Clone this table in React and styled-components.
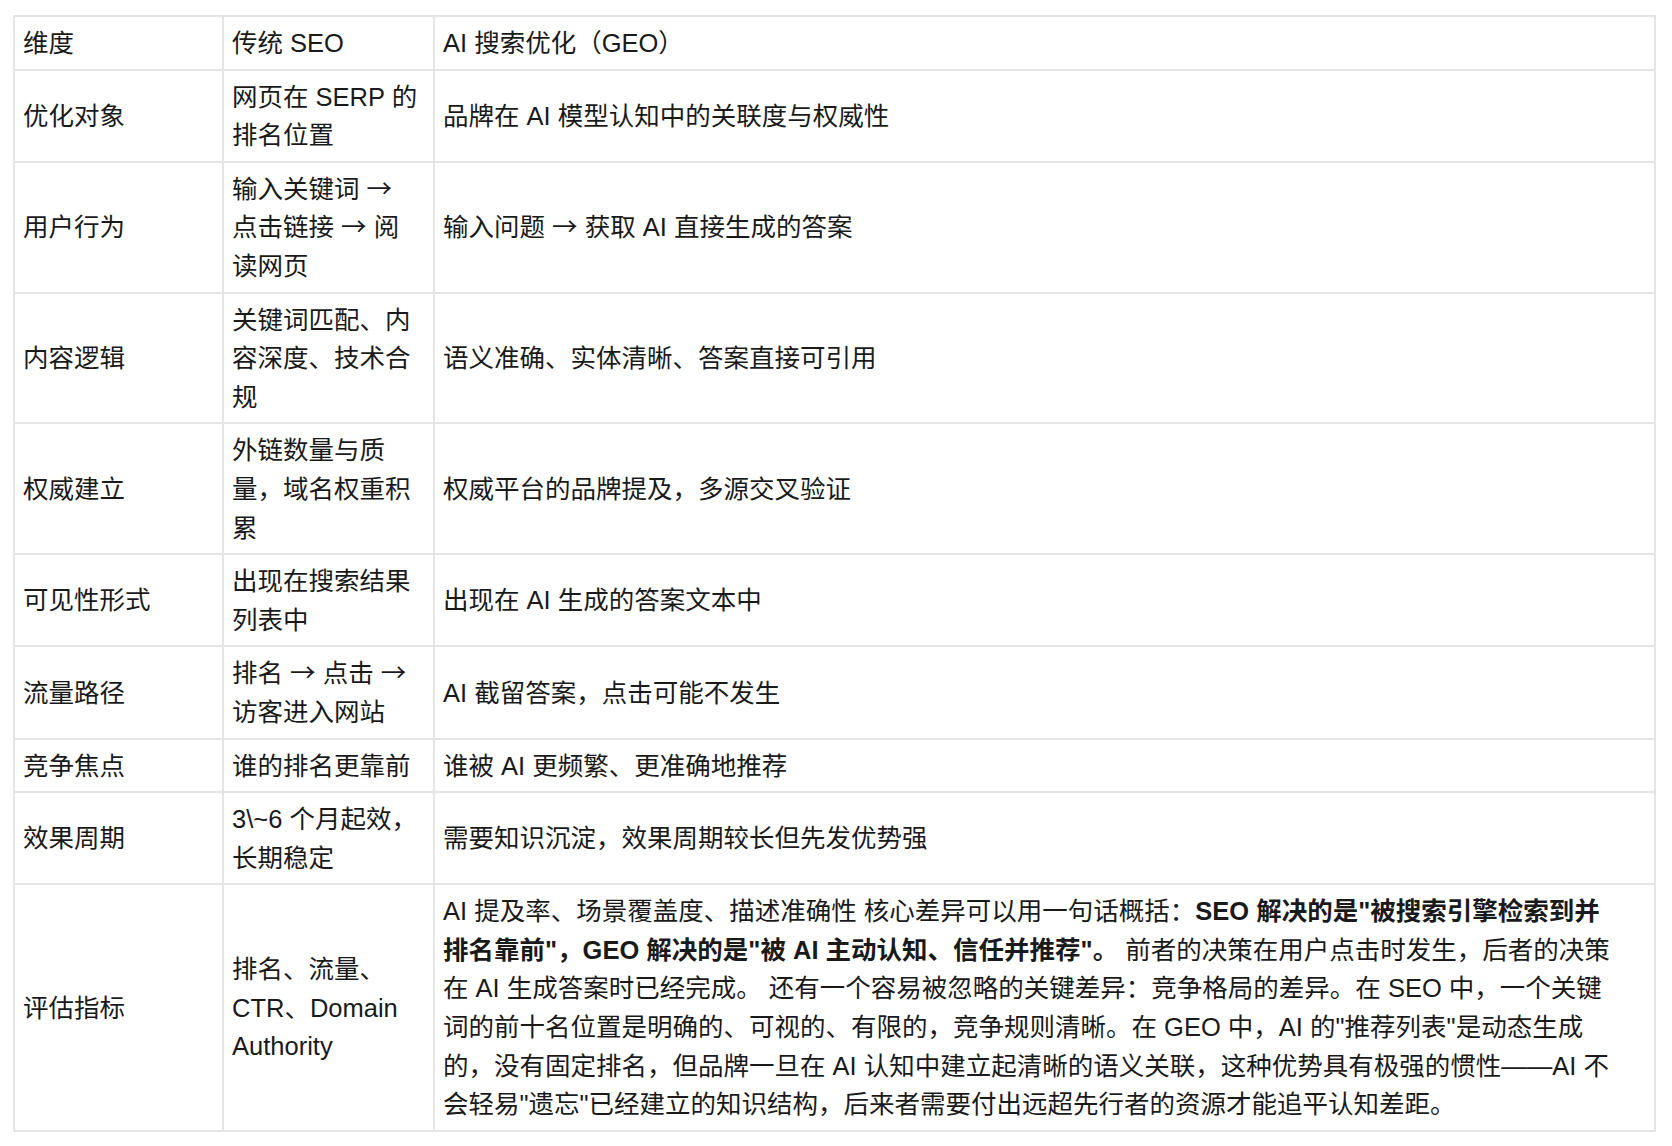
import styled, { createGlobalStyle } from "styled-components";

const GlobalStyle = createGlobalStyle`
  body {
    margin: 0;
    background: #ffffff;
    font-family: "Liberation Sans", "Noto Sans CJK SC", sans-serif;
    color: #1a1a1a;
  }
`;

const A = () => <Arrow>→</Arrow>;

const rows = [
  ["优化对象", <>网页在 SERP 的排名位置</>, <>品牌在 AI 模型认知中的关联度与权威性</>],
  [
    "用户行为",
    <>
      输入关键词 <A /> 点击链接 <A /> 阅读网页
    </>,
    <>
      输入问题 <A /> 获取 AI 直接生成的答案
    </>,
  ],
  ["内容逻辑", <>关键词匹配、内容深度、技术合规</>, <>语义准确、实体清晰、答案直接可引用</>],
  ["权威建立", <>外链数量与质量，域名权重积累</>, <>权威平台的品牌提及，多源交叉验证</>],
  ["可见性形式", <>出现在搜索结果列表中</>, <>出现在 AI 生成的答案文本中</>],
  [
    "流量路径",
    <>
      排名 <A /> 点击 <A /> 访客进入网站
    </>,
    <>AI 截留答案，点击可能不发生</>,
  ],
  ["竞争焦点", <>谁的排名更靠前</>, <>谁被 AI 更频繁、更准确地推荐</>],
  ["效果周期", <>3\~6 个月起效，长期稳定</>, <>需要知识沉淀，效果周期较长但先发优势强</>],
];

const App = () => {
  return (
    <>
      <GlobalStyle />
      <Page>
        <Table>
          <colgroup>
            <col style={{ width: 209 }} />
            <col style={{ width: 211 }} />
            <col />
          </colgroup>
          <tbody>
            <tr>
              <Cell>维度</Cell>
              <Cell>传统 SEO</Cell>
              <Cell>AI 搜索优化（GEO）</Cell>
            </tr>
            {rows.map((r) => (
              <tr key={r[0]}>
                <Cell>{r[0]}</Cell>
                <Cell>{r[1]}</Cell>
                <Cell>{r[2]}</Cell>
              </tr>
            ))}
            <tr>
              <Cell>评估指标</Cell>
              <Cell>排名、流量、CTR、Domain Authority</Cell>
              <Cell>
                AI 提及率、场景覆盖度、描述准确性 核心差异可以用一句话概括：
                <strong>SEO 解决的是"被搜索引擎检索到并</strong>
                <br />
                <strong>排名靠前"，GEO 解决的是"被 AI 主动认知、信任并推荐"。</strong>{" "}
                前者的决策在用户点击时发生，后者的决策
                <br />
                在 AI 生成答案时已经完成。 还有一个容易被忽略的关键差异：竞争格局的差异。在 SEO 中，一个关键
                <br />
                词的前十名位置是明确的、可视的、有限的，竞争规则清晰。在 GEO 中，AI 的"推荐列表"是动态生成
                <br />
                的，没有固定排名，但品牌一旦在 AI 认知中建立起清晰的语义关联，这种优势具有极强的惯性——AI 不
                <br />
                会轻易"遗忘"已经建立的知识结构，后来者需要付出远超先行者的资源才能追平认知差距。
              </Cell>
            </tr>
          </tbody>
        </Table>
      </Page>
    </>
  );
};

export default App;

const Page = styled.div`
  padding: 15px 0 0 13px;
`;

const Table = styled.table`
  width: 1643px;
  table-layout: fixed;
  border-collapse: collapse;
  border: 2px solid #dcdcdc;
  font-size: 25.5px;
  line-height: 38.6px;
`;

const Cell = styled.td`
  border: 2px solid #e5e5e5;
  padding: 7px 9px 6px 8px;
  vertical-align: middle;
  text-align: left;
  word-break: break-word;

  strong {
    font-weight: 700;
  }
`;

const Arrow = styled.span`
  font-family: "Noto Sans CJK SC", sans-serif;
  line-height: 1;
`;
